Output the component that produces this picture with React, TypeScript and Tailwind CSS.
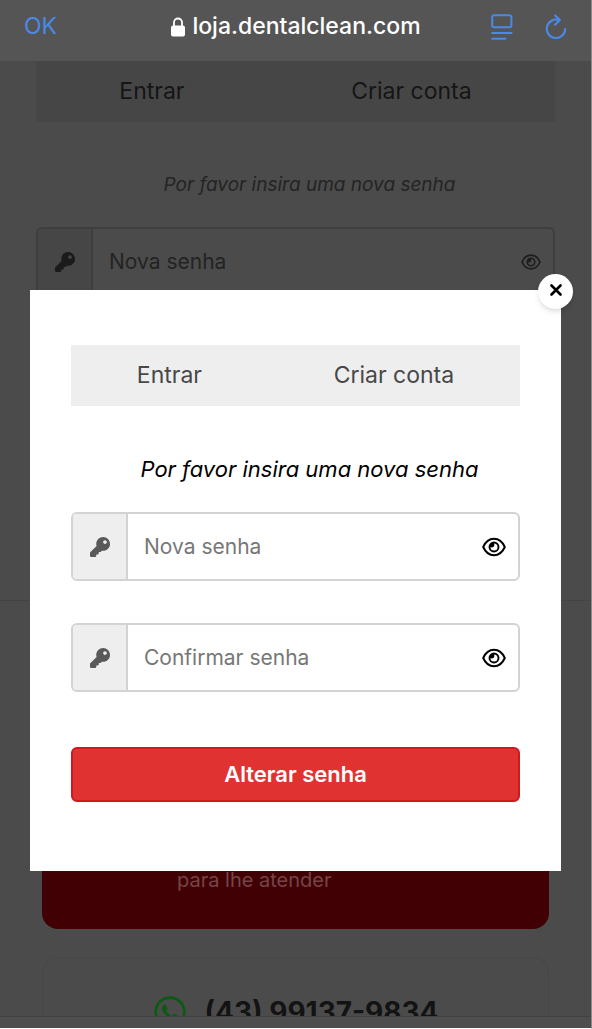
import React from "react";
import { FaKey, FaWhatsapp } from "react-icons/fa";

function EyeIcon({ className }: { className?: string }) {
  return (
    <svg viewBox="0 0 24 24" fill="none" stroke="currentColor" className={className}>
      <path
        d="M1.2 12C3.6 6.6 7.4 3.8 12 3.8S20.4 6.6 22.8 12C20.4 17.4 16.6 20.2 12 20.2S3.6 17.4 1.2 12Z"
        strokeWidth="2"
        strokeLinejoin="round"
      />
      <circle cx="12" cy="12" r="4.5" strokeWidth="1.9" />
      <path d="M12 7.6A4.4 4.4 0 0 0 7.6 12L10 12.6A3 3 0 0 0 12.4 10Z" fill="currentColor" stroke="none" />
    </svg>
  );
}

function LockIcon() {
  return (
    <svg viewBox="0 0 14 20" fill="none" className="h-5 w-4">
      <rect x="0" y="8.5" width="14" height="11" rx="2" fill="currentColor" />
      <path d="M3 9V5.5a4 4 0 0 1 8 0V9" stroke="currentColor" strokeWidth="1.8" />
    </svg>
  );
}

function ReaderIcon() {
  return (
    <svg viewBox="0 0 22 26" fill="none" stroke="currentColor" strokeWidth="2" strokeLinecap="round" className="h-[26px] w-[22px]">
      <rect x="1.2" y="1.2" width="19.2" height="12" rx="2" />
      <path d="M1.2 19H20.6M1.2 24.8H14.4" />
    </svg>
  );
}

function ReloadIcon() {
  return (
    <svg viewBox="0 0 22 28" fill="none" stroke="currentColor" strokeWidth="2.1" strokeLinecap="round" strokeLinejoin="round" className="h-7 w-[22px]">
      <path d="M14 7.1A9.2 9.2 0 1 0 20.2 16" />
      <path d="M10.2 2.4L14.8 7L10 11.8" />
    </svg>
  );
}

function PasswordField({ id, label }: { id: string; label: string }) {
  return (
    <div className="flex h-[69px] overflow-hidden rounded-md border-2 border-[#d3d3d3] bg-white">
      <label
        htmlFor={id}
        aria-label={label}
        className="flex w-[55px] items-center justify-center border-r-2 border-[#d3d3d3] bg-[#eeeeee]"
      >
        <FaKey className="size-5 text-[#595959]" />
      </label>
      <input
        id={id}
        type="password"
        placeholder={label}
        className="min-w-0 flex-1 pl-4 text-[21px] outline-none placeholder:text-[#777777]"
      />
      <button type="button" aria-label="Mostrar senha" className="px-3">
        <EyeIcon className="size-6 text-black" />
      </button>
    </div>
  );
}

export default function App() {
  return (
    <div className="relative flex h-screen flex-col overflow-hidden border-r border-b border-r-[#8a8a8a] border-b-white bg-[#4b4b4b] font-['Inter',sans-serif]">
      {/* Browser bar */}
      <header className="grid h-[61px] shrink-0 grid-cols-[1fr_auto_1fr] items-center bg-[#555555] px-6 pb-2 text-[#4a8ae6]">
        <button type="button" className="justify-self-start text-[23px]">
          OK
        </button>
        <div className="flex items-center gap-1.5 text-[23px] font-medium text-white">
          <LockIcon />
          loja.dentalclean.com
        </div>
        <div className="flex items-center gap-8 justify-self-end">
          <button type="button" aria-label="Leitor">
            <ReaderIcon />
          </button>
          <button type="button" aria-label="Recarregar">
            <ReloadIcon />
          </button>
        </div>
      </header>

      {/* Page behind the dialog */}
      <main className="min-h-0 flex-1 overflow-hidden">
        <section className="h-[540px] border-b border-[#444444] px-9">
          <div className="flex h-[61px] items-center justify-around bg-[#464646] text-[23px] text-[#151515]">
            <button type="button">Entrar</button>
            <button type="button">Criar conta</button>
          </div>
          <p className="mt-12 pl-7 text-center text-[19px] leading-[30px] text-[#242424] italic">
            Por favor insira uma nova senha
          </p>
          <div className="mt-[27px] flex h-[69px] overflow-hidden rounded-md border-2 border-[#3e3e3e]">
            <label
              htmlFor="page-senha"
              aria-label="Nova senha"
              className="flex w-[55px] items-center justify-center border-r-2 border-[#3e3e3e] bg-[#464646]"
            >
              <FaKey className="size-5 text-[#1b1b1b]" />
            </label>
            <input
              id="page-senha"
              type="password"
              placeholder="Nova senha"
              className="min-w-0 flex-1 pl-4 text-[21px] outline-none placeholder:text-[#232323]"
            />
            <button type="button" aria-label="Mostrar senha" className="px-3">
              <EyeIcon className="size-5 text-[#1d1d1d]" />
            </button>
          </div>
        </section>

        <section className="px-[42px] pt-[200px]">
          <div className="h-[128px] rounded-2xl bg-[#400004] pt-[65px] pl-[135px] text-[20px] leading-7 text-[#754548]">
            para lhe atender
          </div>
          <div className="mt-7 flex h-[120px] justify-center gap-4 rounded-2xl border border-[#464646] pt-9">
            <FaWhatsapp className="size-9 text-[#0b5a12]" />
            <strong className="text-[28px] leading-9 text-[#131313]">(43) 99137-9834</strong>
          </div>
        </section>
      </main>
      <footer className="h-3 shrink-0 border-t border-[#414141] bg-[#4e4e4e]" />

      {/* Dialog */}
      <div className="absolute inset-0 px-[30px] pt-[290px]">
        <div role="dialog" aria-label="Alterar senha" className="relative bg-white px-[41px] pt-[55px] pb-[69px]">
          <button
            type="button"
            aria-label="Fechar"
            className="absolute -top-4 -right-3 flex size-[35px] items-center justify-center rounded-full bg-white pb-1 text-black shadow-md"
          >
            <svg viewBox="0 0 12 12" stroke="currentColor" strokeWidth="2.6" strokeLinecap="round" className="size-3">
              <path d="M1.5 1.5L10.5 10.5M10.5 1.5L1.5 10.5" />
            </svg>
          </button>

          <div className="flex h-[61px] items-center justify-around bg-[#eeeeee] text-[23px] text-[#484848]">
            <button type="button">Entrar</button>
            <button type="button">Criar conta</button>
          </div>
          <p className="mt-12 pl-7 text-center text-[22px] leading-[30px] text-black italic">
            Por favor insira uma nova senha
          </p>
          <form className="mt-7">
            <div className="space-y-[42px]">
              <PasswordField id="nova-senha" label="Nova senha" />
              <PasswordField id="confirmar-senha" label="Confirmar senha" />
            </div>
            <button
              type="button"
              className="mt-[55px] h-[55px] w-full rounded-md border-2 border-[#cf1820] bg-[#e13232] text-[22px] font-semibold text-white"
            >
              Alterar senha
            </button>
          </form>
        </div>
      </div>
    </div>
  );
}
